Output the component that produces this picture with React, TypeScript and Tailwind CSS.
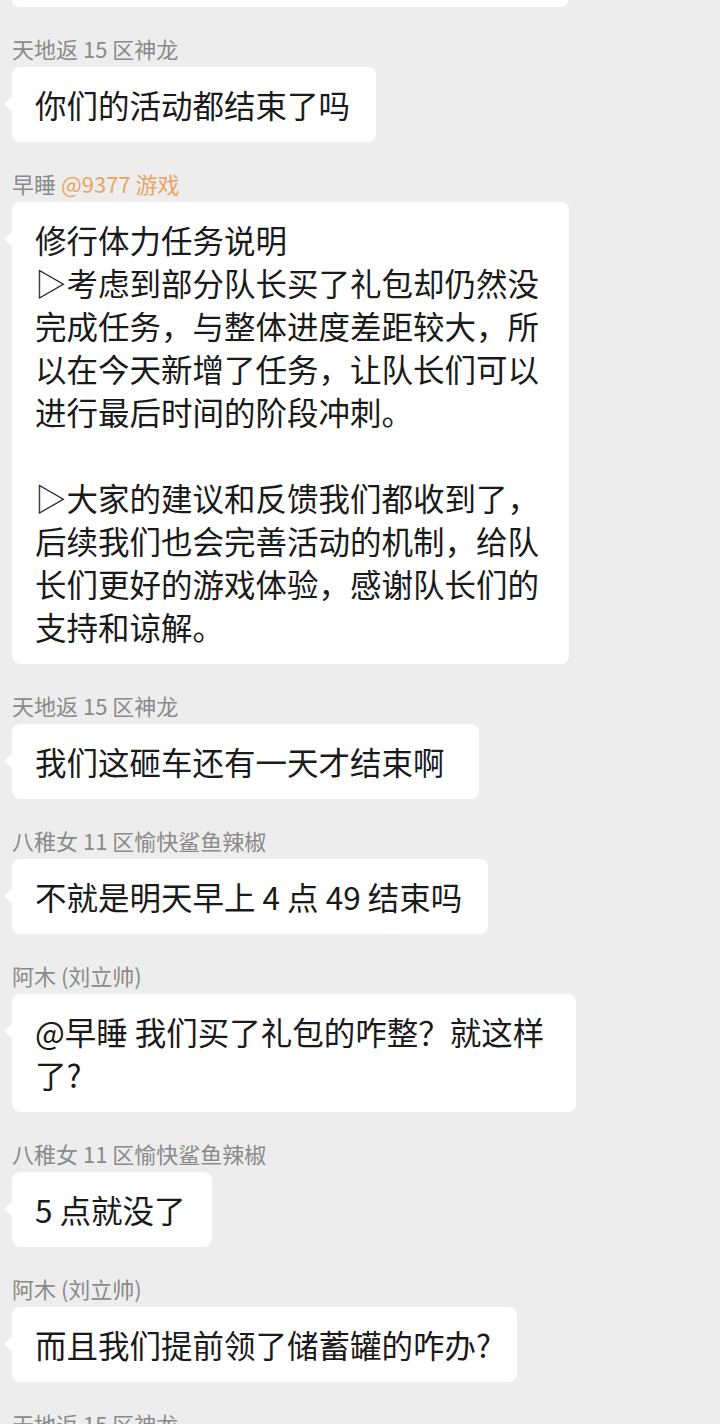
import React from "react";

const Bubble = ({
  children,
  className = "",
}: {
  children: React.ReactNode;
  className?: string;
}) => (
  <div
    className={`relative bg-white rounded-[8px] pl-[23px] pr-[26px] py-4 text-[31.5px] leading-[43px] text-[#1a1a1a] whitespace-nowrap ${className}`}
  >
    <span className="absolute left-[-8px] top-[30px] w-0 h-0 border-y-[7px] border-y-transparent border-r-[8px] border-r-white" />
    {children}
  </div>
);

const Msg = ({
  name,
  children,
  className = "",
}: {
  name: React.ReactNode;
  children: React.ReactNode;
  className?: string;
}) => (
  <div className="mt-[28px] flex flex-col items-start">
    <div className="text-[22px] leading-[26px] text-[#8a8a8a] mb-[6px] whitespace-nowrap">
      {name}
    </div>
    <Bubble className={className}>{children}</Bubble>
  </div>
);

const Lines = ({ lines }: { lines: string[] }) => (
  <>
    {lines.map((l, i) => (
      <div key={i} className="h-[43px]">
        {l === "" ? "\u00a0" : l}
      </div>
    ))}
  </>
);

export default function App() {
  return (
    <div className="h-[1424px] overflow-hidden bg-[#ededed] font-['Noto_Sans_CJK_SC',sans-serif]">
      <div className="ml-3 w-[556px] h-[7px] bg-white rounded-b-[8px]" />
      <div className="flex flex-col items-start px-3">
        <Msg name="天地返 15 区神龙">你们的活动都结束了吗</Msg>
        <Msg
          name={
            <>
              早睡 <span className="text-[#eba45f]">@9377 游戏</span>
            </>
          }
          className="w-[557px]"
        >
          <Lines
            lines={[
              "修行体力任务说明",
              "▷考虑到部分队长买了礼包却仍然没",
              "完成任务，与整体进度差距较大，所",
              "以在今天新增了任务，让队长们可以",
              "进行最后时间的阶段冲刺。",
              "",
              "▷大家的建议和反馈我们都收到了，",
              "后续我们也会完善活动的机制，给队",
              "长们更好的游戏体验，感谢队长们的",
              "支持和谅解。",
            ]}
          />
        </Msg>
        <Msg name="天地返 15 区神龙" className="pr-[34px]">我们这砸车还有一天才结束啊</Msg>
        <Msg name="八稚女 11 区愉快鲨鱼辣椒">不就是明天早上 4 点 49 结束吗</Msg>
        <Msg name="阿木 (刘立帅)" className="w-[564px]">
          <Lines lines={["@早睡 我们买了礼包的咋整？就这样", "了?"]} />
        </Msg>
        <Msg name="八稚女 11 区愉快鲨鱼辣椒">5 点就没了</Msg>
        <Msg name="阿木 (刘立帅)">而且我们提前领了储蓄罐的咋办?</Msg>
        <Msg name="天地返 15 区神龙">在吗</Msg>
      </div>
    </div>
  );
}
